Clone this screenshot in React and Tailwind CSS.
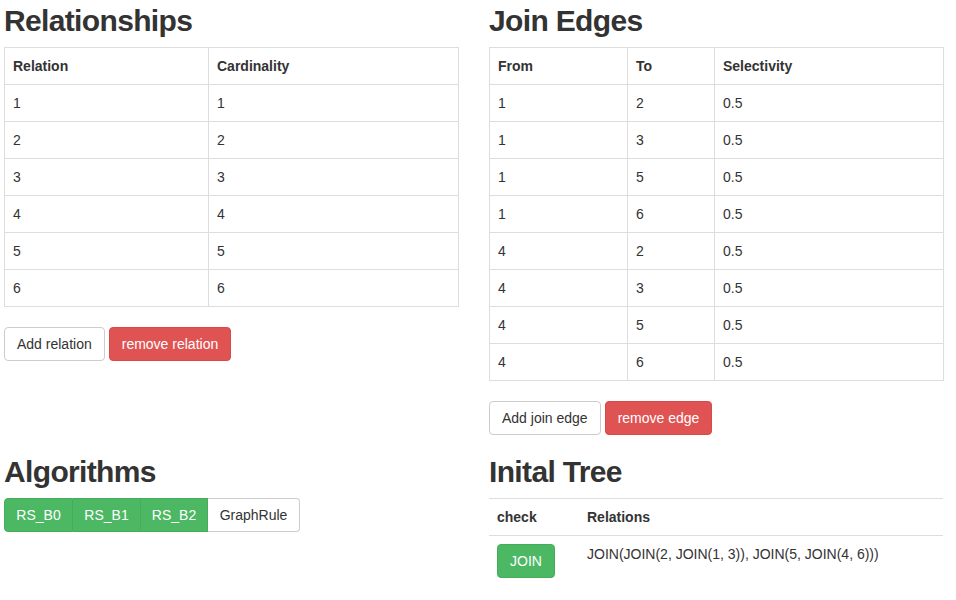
import React from "react";

const font = { fontFamily: '"Liberation Sans", Arial, sans-serif' };

function Btn({ children, variant = "default", className = "" }) {
  const v =
    variant === "danger"
      ? "bg-[#e05353] border-[#d9484a] text-white"
      : variant === "success"
      ? "bg-[#4cb863] border-[#45ad5a] text-white"
      : "bg-white border-[#cccccc] text-[#333333]";
  return (
    <button
      className={`inline-flex items-center justify-center h-[34px] px-[12px] border rounded-[4px] text-[14px] leading-[20px] ${v} ${className}`}
    >
      {children}
    </button>
  );
}

function H2({ children, className = "" }) {
  return (
    <h2 className={`text-[30px] leading-[33px] font-bold tracking-[-0.65px] text-[#333333] mb-[10px] ${className}`}>
      {children}
    </h2>
  );
}

function BorderedTable({ cols, widths, rows }) {
  return (
    <table className="w-[454px] border-collapse border border-[#dddddd] table-fixed">
      <colgroup>
        {widths.map((w, i) => (
          <col key={i} style={{ width: w }} />
        ))}
      </colgroup>
      <thead>
        <tr>
          {cols.map((c) => (
            <th key={c} className="border border-[#dddddd] h-[37px] px-[8px] text-left font-bold text-[14px] leading-[20px]">
              {c}
            </th>
          ))}
        </tr>
      </thead>
      <tbody>
        {rows.map((r, i) => (
          <tr key={i}>
            {r.map((c, j) => (
              <td key={j} className="border border-[#dddddd] h-[37px] px-[8px] text-[14px] leading-[20px]">
                {c}
              </td>
            ))}
          </tr>
        ))}
      </tbody>
    </table>
  );
}

export default function App() {
  const rel = [1, 2, 3, 4, 5, 6].map((n) => [n, n]);
  const edges = [
    [1, 2], [1, 3], [1, 5], [1, 6], [4, 2], [4, 3], [4, 5], [4, 6],
  ].map(([a, b]) => [a, b, "0.5"]);
  return (
    <div style={font} className="w-[956px] h-[600px] bg-white text-[#333333] text-[14px] leading-[20px] pl-[4px] pt-[4px]">
      <div className="flex gap-[30px] items-start">
        <div className="w-[455px]">
          <H2>Relationships</H2>
          <BorderedTable cols={["Relation", "Cardinality"]} widths={["204px", "250px"]} rows={rel} />
          <div className="flex gap-[4px] mt-[20px]">
            <Btn>Add relation</Btn>
            <Btn variant="danger">remove relation</Btn>
          </div>
        </div>
        <div className="w-[455px]">
          <H2>Join Edges</H2>
          <BorderedTable cols={["From", "To", "Selectivity"]} widths={["138px", "87px", "229px"]} rows={edges} />
          <div className="flex gap-[4px] mt-[20px]">
            <Btn>Add join edge</Btn>
            <Btn variant="danger">remove edge</Btn>
          </div>
        </div>
      </div>
      <div className="flex gap-[30px] items-start mt-[20px]">
        <div className="w-[455px]">
          <H2>Algorithms</H2>
          <div className="flex">
            <button className="h-[34px] w-[69px] bg-[#4cb863] border border-[#45ad5a] text-white rounded-l-[4px] text-[14px]">RS_B0</button>
            <button className="h-[34px] w-[68px] bg-[#4cb863] border border-[#45ad5a] border-l-0 text-white text-[14px]">RS_B1</button>
            <button className="h-[34px] w-[67px] bg-[#4cb863] border border-[#45ad5a] border-l-0 text-white text-[14px]">RS_B2</button>
            <button className="h-[34px] w-[92px] bg-white border border-[#cccccc] border-l-0 text-[#333333] rounded-r-[4px] text-[14px]">GraphRule</button>
          </div>
        </div>
        <div className="w-[455px]">
          <H2>Inital Tree</H2>
          <table className="w-[454px] border-collapse table-fixed">
            <colgroup>
              <col style={{ width: "90px" }} />
              <col />
            </colgroup>
            <thead>
              <tr className="border-t border-b border-[#dddddd]">
                <th className="h-[37px] px-[8px] text-left font-bold">check</th>
                <th className="h-[37px] px-[8px] text-left font-bold">Relations</th>
              </tr>
            </thead>
            <tbody>
              <tr>
                <td className="p-[8px] align-top">
                  <Btn variant="success" className="h-[33px]">JOIN</Btn>
                </td>
                <td className="p-[8px] align-top">JOIN(JOIN(2, JOIN(1, 3)), JOIN(5, JOIN(4, 6)))</td>
              </tr>
            </tbody>
          </table>
        </div>
      </div>
    </div>
  );
}
